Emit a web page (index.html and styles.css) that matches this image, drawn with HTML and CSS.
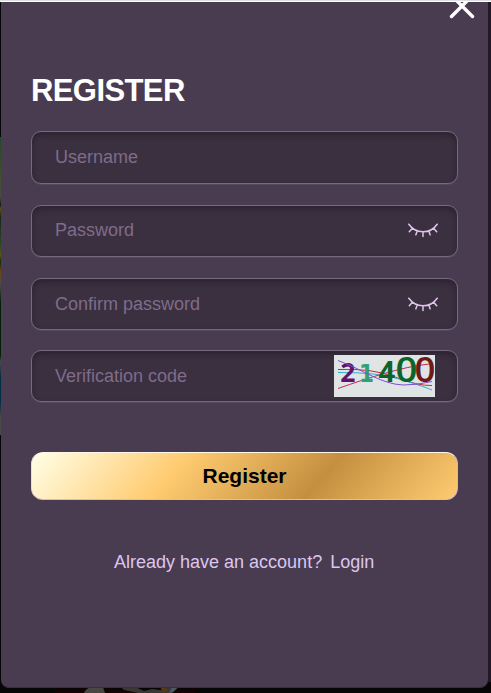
FILE: index.html
```
<!DOCTYPE html>
<html lang="en">
<head>
    <meta charset="UTF-8">
    <meta name="viewport" content="width=device-width, initial-scale=1.0">
    <title>Register</title>
    <link rel="stylesheet" href="styles.css">
</head>
<body>
    <div class="backdrop-left"></div>
    <svg class="backdrop-bottom" width="491" height="6" viewBox="0 0 491 6">
        <path d="M55 3h140v3H55z" fill="#160304"/>
        <path d="M84 6q2-5 8-6h11l2 6z" fill="#4a4644"/>
        <path d="M121 0h14l9 4 8-2 8 1 10-3h9l-7 6h-34l-14-3z" fill="#3a3737"/>
        <path d="M160 0h5l3 4-5 1z" fill="#5c390d"/>
        <path d="M172 0h6l-5 5-4 1z" fill="#4c5a60"/>
    </svg>

    <main class="modal">
        <button class="close-btn" type="button" aria-label="Close">
            <svg width="26" height="26" viewBox="0 0 26 26">
                <path d="M2.5 2.5L23.5 23.5M23.5 2.5L2.5 23.5"/>
            </svg>
        </button>

        <h1 class="title">REGISTER</h1>

        <form class="register-form">
            <div class="field field-username">
                <input class="field-input" type="text" placeholder="Username">
            </div>
            <div class="field field-password">
                <input class="field-input" type="password" placeholder="Password">
                <svg class="eye" width="30" height="15" viewBox="0 0 30 15">
                    <path d="M.8 1.2Q6.3 8.7 15 8.8T29.2 1.2M4.6 5L1.3 8.8M9.2 8L7.9 11.8M15 9v4.4M20.8 8l1.3 3.8M25.4 5l3.3 3.8"/>
                </svg>
            </div>
            <div class="field field-confirm">
                <input class="field-input" type="password" placeholder="Confirm password">
                <svg class="eye" width="30" height="15" viewBox="0 0 30 15">
                    <path d="M.8 1.2Q6.3 8.7 15 8.8T29.2 1.2M4.6 5L1.3 8.8M9.2 8L7.9 11.8M15 9v4.4M20.8 8l1.3 3.8M25.4 5l3.3 3.8"/>
                </svg>
            </div>
            <div class="field field-code">
                <input class="field-input" type="text" placeholder="Verification code">
                <svg class="captcha" width="101" height="42" viewBox="0 0 101 42">
                    <g class="captcha-lines">
                        <path d="M4 14.5Q38 13 61 22T98 30.5" stroke="#cb2836"/>
                        <path d="M4 17.5Q44 17 69 25T98 35" stroke="#31afd0"/>
                        <path d="M4 33.5C34 23 67 12 95 9" stroke="#cc2850"/>
                    </g>
                    <g class="captcha-text">
                        <text x="6.3" y="27" font-size="26.5" fill="#61136b">2</text>
                        <text class="captcha-slab" x="25" y="27" font-size="24.5" textLength="15" lengthAdjust="spacingAndGlyphs" fill="#30a078">1</text>
                        <text x="44.5" y="27" font-size="29" fill="#0d6429">4</text>
                        <text class="captcha-zero" x="61.5" y="26.7" font-size="33.5" textLength="22" lengthAdjust="spacingAndGlyphs" fill="#0d6429">0</text>
                        <text class="captcha-zero" x="80.5" y="26.7" font-size="33.5" textLength="21" lengthAdjust="spacingAndGlyphs" fill="#6e1b18">0</text>
                    </g>
                    <g class="captcha-lines">
                        <path d="M4 5.5C32 16 47 29 69 30Q84 30 98 26.5" stroke="#8050d0"/>
                    </g>
                </svg>
            </div>

            <button class="submit-btn" type="button">Register</button>
        </form>

        <p class="switch">Already have an account? <a class="switch-link" href="#">Login</a></p>
    </main>
</body>
</html>
```

FILE: styles.css
```
* {
    box-sizing: border-box;
}
body {
    margin: 0;
    height: 693px;
    padding: 2px 3px 0 1px;
    position: relative;
    overflow: hidden;
    background: linear-gradient(#dfe0e4 0 1px, #fff 1px 2px, transparent 2px),
        linear-gradient(#211928, #211928) right 0 top 0 / 3px 682px no-repeat,
        #060607;
    font-family: "Liberation Sans", Arial, sans-serif;
}

/* page behind the modal */
.backdrop-left {
    position: absolute;
    left: 0;
    top: 137px;
    width: 1px;
    height: 298px;
    background: linear-gradient(#1f4a2b, #40512a 40px, #4a4a48 60px, #141e10 68px, #65500c 72px, #122814 80px, #34482c 110px, #5a5a0a 118px, #122814 125px, #6b4b0b 135px, #4a4a48 148px, #022205 165px, #022205 218px, #4a4a48 225px, #022d45 240px, #022d45 265px, #4a4a48 280px);
}
.backdrop-bottom {
    position: absolute;
    left: 0;
    bottom: 0;
}

.modal {
    height: 686px;
    padding: 0 30px;
    position: relative;
    overflow: hidden;
    background: #4a3c50;
    border-bottom: 1px solid #392d3e;
    border-radius: 0 0 8px 8px;
}
.close-btn {
    position: absolute;
    top: -9px;
    right: 13px;
    width: 26px;
    height: 26px;
    padding: 0;
    border: 0;
    background: none;
}
.close-btn svg {
    display: block;
    fill: none;
    stroke: #fff;
    stroke-width: 3.4;
    stroke-linecap: round;
}
.title {
    margin: 0;
    padding-top: 70px;
    color: #fff;
    font-size: 31px;
    line-height: 37px;
    letter-spacing: -0.6px;
}

.register-form {
    display: flex;
    flex-direction: column;
    padding-top: 22px;
}
.field {
    display: flex;
    align-items: center;
    height: 52px;
    margin-bottom: 21px;
    padding: 0 22px 0 23px;
    background: #3b303f;
    border: 1px solid #77677f;
    border-radius: 10px;
    box-shadow: inset 0 3px 6px rgba(25, 15, 30, 0.45), 0 1px 0 #554760;
}
.field-username {
    height: 53px;
}
.field-password {
    padding-bottom: 2px;
}
.field-confirm {
    margin-bottom: 20px;
}
.field-code {
    margin-bottom: 50px;
}
.field-input {
    flex: 1;
    min-width: 0;
    padding: 0;
    border: 0;
    outline: 0;
    background: none;
    color: #dcc6f0;
    font-family: inherit;
    font-size: 18px;
}
.field-input::placeholder {
    color: #7f6c8b;
    opacity: 1;
}
.eye {
    margin-right: -3px;
    fill: none;
    stroke: #dfc3e9;
    stroke-width: 1.5;
    stroke-linecap: round;
}
.captcha {
    overflow: visible;
    background: #dfe5e4;
}
.captcha-lines {
    fill: none;
    stroke-width: 1;
}
.captcha-text {
    font-family: "Open Sans", "Noto Sans", sans-serif;
    font-weight: 700;
}
.captcha-slab {
    font-family: "DejaVu Sans", sans-serif;
}
.captcha-zero {
    font-weight: 600;
}

.submit-btn {
    height: 48px;
    padding: 0;
    border: 1px solid;
    border-color: #fff7e6 #c9bac0 #d1c0c0 #e9dfdd;
    border-radius: 12px;
    background: linear-gradient(131deg, #ffffe8 0%, #ffcb70 34%, #c49040 67%, #ffcb70 100%);
    color: #000;
    font-family: inherit;
    font-size: 21px;
    font-weight: 700;
}
.switch {
    margin: 52px 0 0;
    padding-left: 83px;
    color: #dcc6ee;
    font-size: 18px;
    line-height: 21px;
}
.switch-link {
    margin-left: 3px;
    color: inherit;
    text-decoration: none;
}
```
